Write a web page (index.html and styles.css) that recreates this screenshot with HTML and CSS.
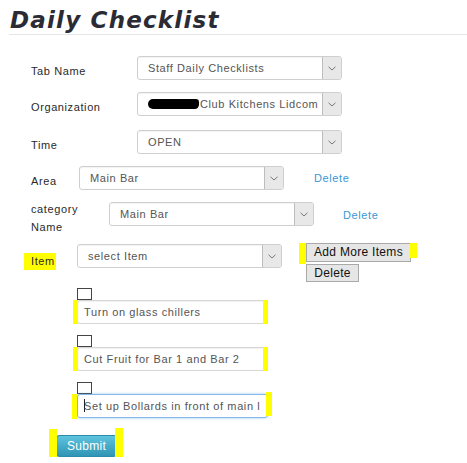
FILE: index.html
```html
<!DOCTYPE html>
<html>
<head>
<meta charset="utf-8">
<link rel="stylesheet" href="styles.css">
</head>
<body>
<div class="page">
  <h1 class="title">Daily Checklist</h1>
  <div class="form">
    <div class="row r1">
      <div class="label lw-wide">Tab Name</div>
      <div class="select"><span class="value">Staff Daily Checklists</span><span class="arrow"><svg width="8" height="5" viewBox="0 0 8 5"><path d="M0.5 0.8 L4 4 L7.5 0.8" fill="none" stroke="#777" stroke-width="1"/></svg></span></div>
    </div>
    <div class="row r2">
      <div class="label lw-wide">Organization</div>
      <div class="select"><span class="value"><span class="redact"></span>Club Kitchens Lidcom</span><span class="arrow"><svg width="8" height="5" viewBox="0 0 8 5"><path d="M0.5 0.8 L4 4 L7.5 0.8" fill="none" stroke="#777" stroke-width="1"/></svg></span></div>
    </div>
    <div class="row r3">
      <div class="label lw-wide">Time</div>
      <div class="select"><span class="value">OPEN</span><span class="arrow"><svg width="8" height="5" viewBox="0 0 8 5"><path d="M0.5 0.8 L4 4 L7.5 0.8" fill="none" stroke="#777" stroke-width="1"/></svg></span></div>
    </div>
    <div class="row r4">
      <div class="label lw-area">Area</div>
      <div class="select"><span class="value">Main Bar</span><span class="arrow"><svg width="8" height="5" viewBox="0 0 8 5"><path d="M0.5 0.8 L4 4 L7.5 0.8" fill="none" stroke="#777" stroke-width="1"/></svg></span></div>
      <a class="del-link dl-area">Delete</a>
    </div>
    <div class="row r5">
      <div class="label lw-cat two-line">category<br>Name</div>
      <div class="select sel-cat"><span class="value">Main Bar</span><span class="arrow"><svg width="8" height="5" viewBox="0 0 8 5"><path d="M0.5 0.8 L4 4 L7.5 0.8" fill="none" stroke="#777" stroke-width="1"/></svg></span></div>
      <a class="del-link dl-cat">Delete</a>
    </div>
    <div class="row r6">
      <div class="label lw-item"><span class="hl-label">Item</span></div>
      <div class="select sel-item"><span class="value">select Item</span><span class="arrow"><svg width="8" height="5" viewBox="0 0 8 5"><path d="M0.5 0.8 L4 4 L7.5 0.8" fill="none" stroke="#777" stroke-width="1"/></svg></span></div>
      <div class="btn-col">
        <div class="btn btn-add">Add More Items<span class="mk mk-add-l"></span><span class="mk mk-add-r"></span></div>
        <div class="btn btn-del">Delete</div>
      </div>
    </div>
    <div class="items">
      <div class="item">
        <div class="check"></div>
        <div class="text-in"><span class="txt">Turn on glass chillers</span><span class="mk mk-in-l"></span><span class="mk mk-in-r"></span></div>
      </div>
      <div class="item">
        <div class="check"></div>
        <div class="text-in"><span class="txt">Cut Fruit for Bar 1 and Bar 2</span><span class="mk mk-in-l"></span><span class="mk mk-in-r"></span></div>
      </div>
      <div class="item">
        <div class="check"></div>
        <div class="text-in focused"><span class="txt"><span class="caret"></span>Set up Bollards in front of main l</span><span class="mk mk-f-l"></span><span class="mk mk-f-r"></span></div>
      </div>
    </div>
    <div class="submit-wrap">
      <div class="submit">Submit<span class="mk mk-s-l"></span><span class="mk mk-s-r"></span></div>
    </div>
  </div>
</div>
</body>
</html>
```

FILE: styles.css
```css
html, body {
  margin: 0;
  padding: 0;
  background: #fff;
}
body {
  font-family: "Liberation Sans", Arial, sans-serif;
  font-size: 11px;
  letter-spacing: 0.6px;
  color: #2a2a2a;
}
.page {
  width: 467px;
}
.title {
  margin: 0 0 0 9px;
  padding: 7px 0 1px 1px;
  font-family: "DejaVu Sans", sans-serif;
  font-weight: bold;
  font-style: italic;
  font-size: 23px;
  line-height: 26px;
  letter-spacing: 1.2px;
  color: #2b2b35;
  border-bottom: 1px solid #e6e6e6;
}
.form {
  padding: 21px 0 0 31px;
  display: flex;
  flex-direction: column;
}
.row {
  display: flex;
  align-items: center;
}
.r2 { margin-top: 12px; }
.r3 { margin-top: 14px; }
.r4 { margin-top: 12px; }
.r5 { margin-top: 10px; align-items: flex-start; }
.r6 { margin-top: 7px; align-items: flex-start; }

.label {
  flex: none;
  padding-top: 6px;
  line-height: 14px;
  color: #2a2a2a;
}
.lw-wide { width: 106px; }
.lw-area { width: 48px; }
.lw-cat { width: 78px; }
.lw-item { width: 46px; }
.two-line {
  padding-top: 0;
  line-height: 18px;
}
.lw-item {
  padding-top: 10px;
}
.hl-label {
  display: inline-block;
  background: #ffff00;
  margin-left: -7px;
  padding: 0 1px 0 7px;
  line-height: 17px;
}

.select {
  flex: none;
  box-sizing: border-box;
  width: 205px;
  height: 24px;
  border: 1px solid #cfcfcf;
  border-radius: 3px;
  background: #fff;
  display: flex;
  box-shadow: inset 0 1px 1px rgba(0,0,0,0.05);
}
.select .value {
  flex: 1;
  min-width: 0;
  padding-left: 10px;
  line-height: 22px;
  color: #555;
  white-space: nowrap;
  overflow: hidden;
}
.select .arrow {
  flex: none;
  box-sizing: border-box;
  width: 19px;
  background: #e8e8e8;
  border-left: 1px solid #bdbdbd;
  border-radius: 0 2px 2px 0;
  display: flex;
  align-items: center;
  justify-content: center;
}
.redact {
  display: inline-block;
  width: 51px;
  height: 10px;
  background: #000;
  border-radius: 6px 4px 5px 6px;
  vertical-align: -1px;
  margin-right: 1px;
}
.sel-cat { margin-top: 2px; }
.sel-item { margin-top: 1px; }

.del-link {
  color: #3a97d4;
  cursor: pointer;
}
.dl-area { margin-left: 30px; }
.dl-cat { margin-left: 29px; margin-top: 2px; line-height: 26px; }

.btn-col {
  margin-left: 24px;
  display: flex;
  flex-direction: column;
  align-items: flex-start;
  gap: 2px;
}
.btn {
  position: relative;
  box-sizing: border-box;
  background: #e6e6e6;
  border: 1px solid #a9a9a9;
  color: #111;
  font-size: 12px;
  letter-spacing: 0.3px;
  text-align: center;
}
.btn-add {
  width: 105px;
  height: 19px;
  line-height: 17px;
}
.btn-del {
  width: 53px;
  height: 18px;
  line-height: 16px;
}

.mk {
  position: absolute;
  background: #ffff00;
}
.mk-add-l { left: -8px; top: -1px; width: 7px; height: 21px; }
.mk-add-r { right: -7px; top: -1px; width: 7px; height: 15px; }

.items {
  margin-left: 46px;
  margin-top: 6px;
  display: flex;
  flex-direction: column;
  gap: 11px;
}
.item {
  display: flex;
  flex-direction: column;
  align-items: flex-start;
}
.check {
  box-sizing: border-box;
  width: 15px;
  height: 12px;
  border: 1px solid #444;
  background: #fff;
}
.text-in {
  position: relative;
  box-sizing: border-box;
  width: 191px;
  height: 24px;
  border: 1px solid #d6d6d6;
  border-radius: 3px;
  line-height: 22px;
  color: #555;
  box-shadow: inset 0 1px 1px rgba(0,0,0,0.06);
}
.text-in .txt {
  display: block;
  padding-left: 6px;
  padding-right: 2px;
  white-space: nowrap;
  overflow: hidden;
}
.text-in.focused {
  border-color: #86b7e6;
  box-shadow: 0 0 3px rgba(82,168,236,0.6);
}
.caret {
  display: inline-block;
  width: 1px;
  height: 13px;
  background: #222;
  vertical-align: -2px;
  margin-right: -1px;
}
.mk-in-l { left: -5px; top: -1px; width: 5px; height: 24px; }
.mk-in-r { right: -1px; top: -1px; width: 5px; height: 24px; }
.mk-f-l { left: -6px; top: -1px; width: 5px; height: 25px; }
.mk-f-r { right: -5px; top: -3px; width: 6px; height: 24px; }

.submit-wrap {
  margin-left: 25px;
  margin-top: 17px;
}
.submit {
  position: relative;
  box-sizing: border-box;
  width: 61px;
  height: 22px;
  border: 1px solid #2b8cab;
  border-radius: 3px;
  background: linear-gradient(#5ec3df, #2f95b4);
  color: #fff;
  font-size: 12px;
  letter-spacing: 0.3px;
  line-height: 20px;
  text-align: center;
}
.mk-s-l { left: -8px; top: -7px; width: 8px; height: 31px; }
.mk-s-r { right: -7px; top: -8px; width: 8px; height: 32px; }
```
